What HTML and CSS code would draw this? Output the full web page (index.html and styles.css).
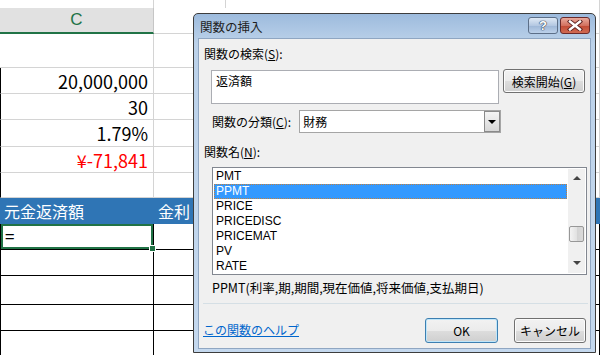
FILE: index.html
```html
<!DOCTYPE html>
<html lang="ja">
<head>
    <meta charset="UTF-8">
    <title>関数の挿入</title>
    <link rel="stylesheet" href="styles.css">
</head>
<body>

<div class="sheet">
    <div class="row r-top"><div class="cell c"></div><div class="cell d"></div></div>
    <div class="row r-head"><div class="cell c">C</div><div class="cell d"></div></div>
    <div class="row r-34"><div class="cell c"></div><div class="cell d"></div></div>
    <div class="row r-26 boxed"><div class="cell c num">20,000,000</div><div class="cell d"></div></div>
    <div class="row r-26 boxed"><div class="cell c num">30</div><div class="cell d"></div></div>
    <div class="row r-27 boxed"><div class="cell c num">1.79%</div><div class="cell d"></div></div>
    <div class="row r-26 boxed"><div class="cell c num neg">¥-71,841</div><div class="cell d"></div></div>
    <div class="row r-25 boxed"><div class="cell c"></div><div class="cell d"></div></div>
    <div class="row r-26 title-row"><div class="cell c">元金返済額</div><div class="cell d">金利</div></div>
    <div class="row r-26 grid"><div class="cell c selected">=<span class="fill-handle"></span></div><div class="cell d"></div></div>
    <div class="row r-26 grid"><div class="cell c"></div><div class="cell d"></div></div>
    <div class="row r-29 grid"><div class="cell c"></div><div class="cell d"></div></div>
    <div class="row r-26 grid"><div class="cell c"></div><div class="cell d"></div></div>
    <div class="row r-26 grid"><div class="cell c"></div><div class="cell d"></div></div>
</div>

<!-- Insert Function dialog -->
<div class="dialog">
    <div class="dialog-title">
        <span class="dialog-caption">関数の挿入</span>
        <span class="cap-btn help-btn">?</span>
        <span class="cap-btn close-btn">
            <svg width="16" height="11" viewBox="0 0 16 11">
                <path d="M3 1.5 L13 9.5 M13 1.5 L3 9.5" stroke="#5a2020" stroke-width="4.2" stroke-linecap="square"/>
                <path d="M3 1.5 L13 9.5 M13 1.5 L3 9.5" stroke="#ffffff" stroke-width="2.4" stroke-linecap="square"/>
            </svg>
        </span>
    </div>

    <div class="dialog-body">
        <div class="label top-label">関数の検索(<u>S</u>):</div>

        <div class="search-row">
            <div class="search-box">返済額</div>
            <button class="btn search-btn">検索開始(<u>G</u>)</button>
        </div>

        <div class="category-row">
            <span class="label">関数の分類(<u>C</u>):</span>
            <div class="combo">
                <span class="combo-text">財務</span>
                <span class="combo-arrow"><span class="tri-down"></span></span>
            </div>
        </div>

        <div class="label name-label">関数名(<u>N</u>):</div>

        <div class="listbox">
            <div class="list-items">
                <div class="item">PMT</div>
                <div class="item active">PPMT</div>
                <div class="item">PRICE</div>
                <div class="item">PRICEDISC</div>
                <div class="item">PRICEMAT</div>
                <div class="item">PV</div>
                <div class="item">RATE</div>
            </div>
            <div class="scrollbar">
                <span class="sb-up"></span>
                <span class="sb-thumb"></span>
                <span class="sb-down"></span>
            </div>
        </div>

        <div class="desc">PPMT(利率,期,期間,現在価値,将来価値,支払期日)</div>

        <div class="separator"></div>

        <div class="footer">
            <a class="help-link" href="#">この関数のヘルプ</a>
            <button class="btn ok-btn">OK</button>
            <button class="btn cancel-btn">キャンセル</button>
        </div>
    </div>
</div>

</body>
</html>
```

FILE: styles.css
```css
body {
    margin: 0;
    width: 600px;
    height: 355px;
    overflow: hidden;
    background: #ffffff;
    font-family: "Noto Sans CJK JP", "Noto Sans", sans-serif;
    position: relative;
}

/* spreadsheet */
.sheet {
    display: flex;
    flex-direction: column;
}

.row {
    display: flex;
    box-sizing: border-box;
}

.cell {
    box-sizing: border-box;
    border-right: 1px solid #d4d4d4;
    border-bottom: 1px solid #d4d4d4;
    display: flex;
    align-items: center;
}

.cell.c {
    width: 154px;
}

.cell.d {
    width: 446px;
}

.r-top { height: 8px; }
.r-top .cell { border-bottom: none; }
.r-top .cell.d {
    background: linear-gradient(90deg, transparent 71px, #d4d4d4 71px, #d4d4d4 72px, transparent 72px);
}
.r-head { height: 26px; }
.r-34 { height: 34px; }
.r-25 { height: 25px; }
.r-26 { height: 26px; }
.r-27 { height: 27px; }
.r-29 { height: 29px; }

.r-head .cell.c {
    background: #e1e1e1;
    border-bottom: 2px solid #217346;
    border-right: 1px solid #c6c6c6;
    color: #217346;
    font-family: "Liberation Sans", sans-serif;
    font-size: 17px;
    justify-content: center;
}

.num {
    justify-content: flex-end;
    padding-right: 5px;
    font-size: 18px;
    color: #000000;
}

.neg {
    color: #ff0000;
}

.boxed .cell.c {
    border-left: 1px solid #000000;
}

.title-row .cell {
    background: #2f75b5;
    color: #ffffff;
    font-size: 16px;
    border-right: 1px solid #2f75b5;
    border-bottom: 1px solid #2f75b5;
    padding-left: 4px;
}

.grid .cell {
    border-right: 1px solid #000000;
    border-bottom: 1px solid #000000;
}

.grid .cell.c {
    border-left: 1px solid #000000;
}

.cell.selected {
    position: relative;
    box-shadow: inset 0 0 0 2px #217346;
    font-size: 17px;
    padding-left: 4px;
    padding-bottom: 2px;
}

.fill-handle {
    position: absolute;
    right: -3px;
    bottom: -3px;
    width: 5px;
    height: 5px;
    background: #217346;
    border: 1px solid #ffffff;
}

/* dialog window */
.dialog {
    position: absolute;
    left: 193px;
    top: 13px;
    width: 403px;
    height: 340px;
    box-sizing: border-box;
    border: 1px solid #3d3d3d;
    border-radius: 5px 5px 0 0;
    background: linear-gradient(#9dbbdd, #bcd2ea 30px, #c4d8ee);
    display: flex;
    flex-direction: column;
    font-size: 12px;
    color: #000000;
}

.dialog-title {
    height: 24px;
    display: flex;
    align-items: center;
    position: relative;
    flex-shrink: 0;
}

.dialog-caption {
    margin-left: 6px;
    font-size: 12.5px;
    color: #1e1e1e;
}

.cap-btn {
    position: absolute;
    top: 3px;
    height: 17px;
    box-sizing: border-box;
    border: 1px solid #5c6f88;
    border-radius: 3px;
    display: flex;
    align-items: center;
    justify-content: center;
}

.help-btn {
    left: 334px;
    width: 30px;
    background: linear-gradient(#dfe9f5, #b4c8e2 50%, #9db6d6 51%, #bcd1ea);
    color: #ffffff;
    font-family: "Liberation Sans", sans-serif;
    font-weight: bold;
    font-size: 13px;
    text-shadow: 0 0 1px #2b3a50, 0 0 1px #2b3a50, 0 0 1px #2b3a50;
}

.close-btn {
    left: 366px;
    width: 30px;
    border-color: #6b2a2a;
    background: linear-gradient(#e9a99c, #d3715f 50%, #c24a34 51%, #d06a52);
}

.dialog-body {
    flex: 1;
    margin: 0 4px 3px 4px;
    border: 1px solid #8fa6c2;
    background: #f0f0f0;
    position: relative;
    display: flex;
    flex-direction: column;
}

.label {
    line-height: 16px;
    white-space: nowrap;
}

.top-label {
    margin: 7px 0 0 5px;
}

.search-row {
    display: flex;
    align-items: flex-start;
    margin: 8px 0 0 12px;
}

.search-box {
    width: 288px;
    height: 34px;
    box-sizing: border-box;
    border: 1px solid #abadb3;
    background: #ffffff;
    padding: 2px 4px;
    line-height: 16px;
}

.btn {
    font-family: "Noto Sans CJK JP", "Noto Sans", sans-serif;
    font-size: 12px;
    color: #000000;
    box-sizing: border-box;
    border: 1px solid #707070;
    border-radius: 3px;
    background: linear-gradient(#f2f2f2, #ebebeb 50%, #dddddd 51%, #cfcfcf);
    box-shadow: inset 0 0 0 1px #fcfcfc;
    padding: 0;
}

.search-btn {
    width: 82px;
    height: 24px;
    margin: -1px 0 0 4px;
}

.category-row {
    display: flex;
    align-items: center;
    margin: 6px 0 0 13px;
}

.combo {
    margin-left: 8px;
    width: 202px;
    height: 23px;
    box-sizing: border-box;
    border: 1px solid #a5a5a5;
    background: #ffffff;
    display: flex;
    align-items: center;
}

.combo-text {
    flex: 1;
    padding-left: 3px;
}

.combo-arrow {
    width: 16px;
    height: 21px;
    box-sizing: border-box;
    border: 1px solid #8a8a8a;
    background: linear-gradient(#f4f4f4, #d8d8d8);
    display: flex;
    align-items: center;
    justify-content: center;
}

.tri-down {
    width: 0;
    height: 0;
    border-left: 4px solid transparent;
    border-right: 4px solid transparent;
    border-top: 4px solid #000000;
}

.name-label {
    margin: 11px 0 0 5px;
}

.listbox {
    margin: 7px 0 0 13px;
    width: 375px;
    height: 108px;
    box-sizing: border-box;
    border: 1px solid #828790;
    background: #ffffff;
    display: flex;
    padding: 1px;
}

.list-items {
    flex: 1;
}

.item {
    height: 15px;
    line-height: 15px;
    padding-left: 2px;
    font-family: "Liberation Sans", Arial, sans-serif;
    font-size: 12px;
}

.item.active {
    background: #3399ff;
    color: #ffffff;
    outline: 1px dotted #c08040;
    outline-offset: -1px;
}

.scrollbar {
    width: 17px;
    margin-left: 1px;
    background: #f0f0f0;
    position: relative;
}

.sb-up,
.sb-down {
    position: absolute;
    left: 5px;
    width: 0;
    height: 0;
    border-left: 4px solid transparent;
    border-right: 4px solid transparent;
}

.sb-up {
    top: 7px;
    border-bottom: 4px solid #444444;
}

.sb-down {
    bottom: 8px;
    border-top: 4px solid #444444;
}

.sb-thumb {
    position: absolute;
    left: 1px;
    top: 57px;
    width: 15px;
    height: 16px;
    box-sizing: border-box;
    border: 1px solid #979797;
    border-radius: 2px;
    background: linear-gradient(90deg, #f3f3f3, #e2e2e2 50%, #d3d3d3 51%, #dadada);
}

.desc {
    margin: 5px 0 0 13px;
    line-height: 16px;
    font-size: 12.5px;
    white-space: nowrap;
}

.separator {
    margin: 7px 2px 0 4px;
    border-top: 1px solid #d5dfe5;
}

.footer {
    display: flex;
    align-items: center;
    margin: 14px 0 0 4px;
}

.help-link {
    color: #0066cc;
    text-decoration: underline;
    margin-right: auto;
    line-height: 16px;
    padding-bottom: 2px;
}

.ok-btn {
    width: 73px;
    height: 25px;
    border-color: #3c7fb1;
    box-shadow: inset 0 0 0 1px #bfe6fa;
}

.cancel-btn {
    width: 72px;
    height: 25px;
    margin: 0 4px 0 16px;
}
```
